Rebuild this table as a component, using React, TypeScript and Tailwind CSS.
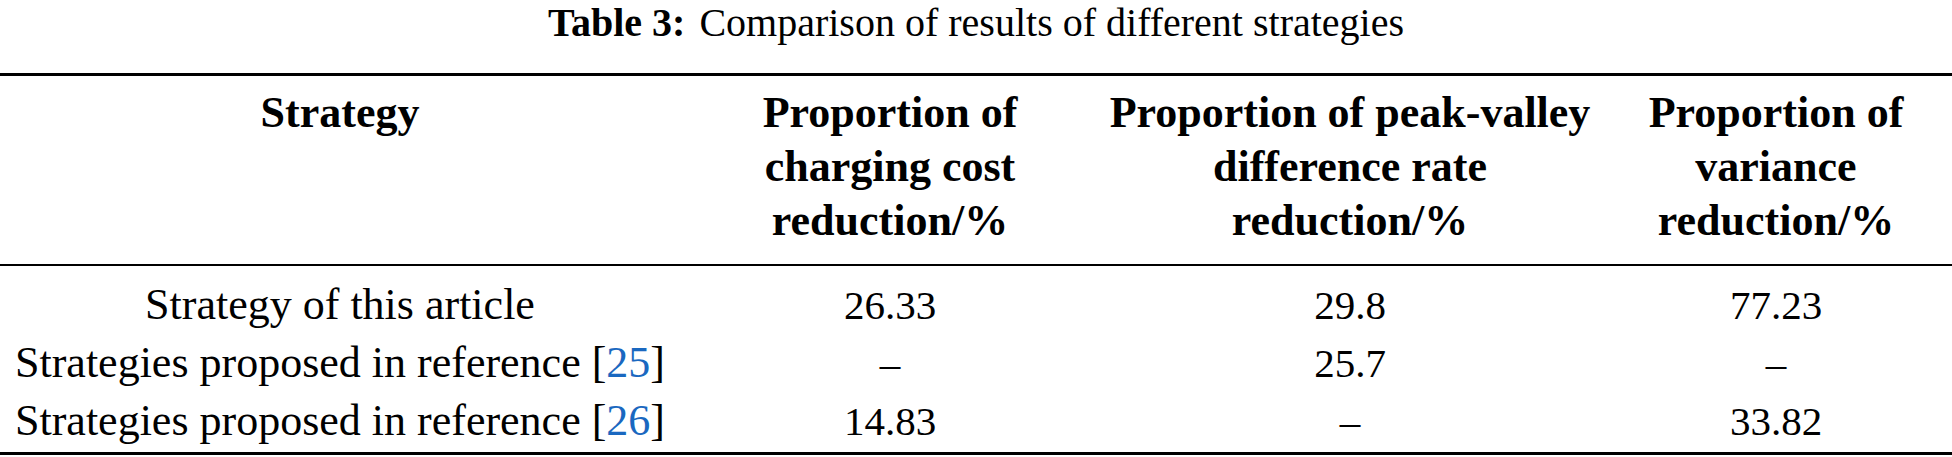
import React from "react";

function Ref({ n }: { n: string }) {
  return (
    <>
      [<span className="text-[#1a68c0]">{n}</span>]
    </>
  );
}

export default function App() {
  const rows: { name: React.ReactNode; a: string; b: string; c: string }[] = [
    { name: "Strategy of this article", a: "26.33", b: "29.8", c: "77.23" },
    { name: <>Strategies proposed in reference <Ref n="25" /></>, a: "–", b: "25.7", c: "–" },
    { name: <>Strategies proposed in reference <Ref n="26" /></>, a: "14.83", b: "–", c: "33.82" },
  ];
  const cols = "grid grid-cols-[680px_420px_500px_352px]";
  return (
    <div className="w-[1952px] h-[457px] bg-white text-black overflow-hidden font-['Liberation_Serif','Times_New_Roman',serif]">
      <div className="h-[73px] pt-[1px] text-center text-[40px] leading-[44px]">
        <span className="font-bold">Table 3:</span>
        <span className="ml-[14px]">Comparison of results of different strategies</span>
      </div>
      <div className="border-t-[3px] border-black" />
      <div className={`${cols} pt-[10px] pb-[16px] text-[44px] leading-[54px] font-bold text-center`}>
        <div>Strategy</div>
        <div>Proportion of<br />charging cost<br />reduction/%</div>
        <div>Proportion of peak-valley<br />difference rate<br />reduction/%</div>
        <div>Proportion of<br />variance<br />reduction/%</div>
      </div>
      <div className="border-t-[2px] border-black" />
      <div className="pt-[10px] pb-[2px]">
        {rows.map((r, i) => (
          <div key={i} className={`${cols} h-[58px] items-baseline text-center leading-[58px]`}>
            <div className="text-[44px] whitespace-nowrap">{r.name}</div>
            <div className="text-[41px]">{r.a}</div>
            <div className="text-[41px]">{r.b}</div>
            <div className="text-[41px]">{r.c}</div>
          </div>
        ))}
      </div>
      <div className="border-t-[3px] border-black" />
    </div>
  );
}
